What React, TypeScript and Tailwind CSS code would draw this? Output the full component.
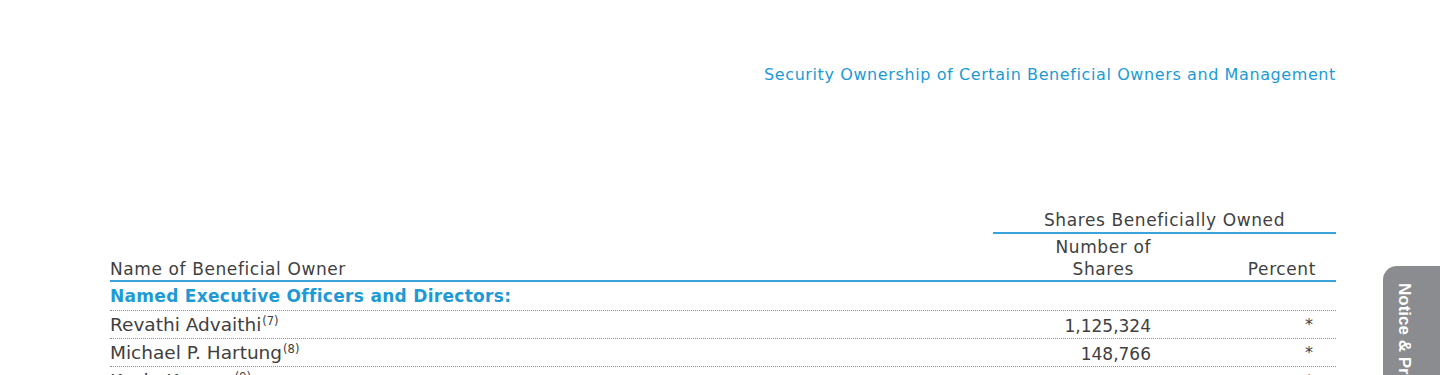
import React from "react";

// Beneficial ownership table (proxy statement page)

type Owner = {
  name: string;
  note: string;
  shares: string;
  percent: string;
};

const OWNERS: Owner[] = [
  { name: "Revathi Advaithi", note: "(7)", shares: "1,125,324", percent: "*" },
  { name: "Michael P. Hartung", note: "(8)", shares: "148,766", percent: "*" },
  { name: "Kevin Krumm", note: "(9)", shares: "92,418", percent: "*" },
  { name: "Scott Offer", note: "(10)", shares: "231,905", percent: "*" },
];

function OwnerRow({ owner }: { owner: Owner }) {
  return (
    <div className="grid h-7 grid-cols-[883px_158px_1fr] items-center border-b border-dotted border-[#8f8f8f] pr-5">
      <div className="text-[18.5px] leading-6">
        {owner.name}
        <sup className="ml-[1px] text-[11.5px] tracking-normal">{owner.note}</sup>
      </div>
      <div className="pt-[2px] text-right text-[17px] leading-6">{owner.shares}</div>
      <div className="pr-[3px] text-right text-[16px] leading-6">{owner.percent}</div>
    </div>
  );
}

export default function App() {
  return (
    <div className="relative min-h-screen overflow-hidden bg-white font-['DejaVu_Sans',sans-serif] text-[#404041]">
      <div className="ml-[110px] w-[1226px] pt-[63px]">
        {/* Running header */}
        <p className="text-right text-[16px] leading-6 tracking-[0.6px] text-[#1d9ad6]">
          Security Ownership of Certain Beneficial Owners and Management
        </p>

        {/* Table */}
        <div className="mt-[122px]">
          <div className="ml-[883px] border-b-2 border-[#3ba3da] pb-[1px] text-center text-[17px] leading-[22px] tracking-[0.6px]">
            Shares Beneficially Owned
          </div>

          <div className="grid grid-cols-[883px_158px_1fr] items-end border-b-2 border-[#3ba3da] pr-5 pt-[2px] text-[17px] leading-[22px] tracking-[0.6px]">
            <div>Name of Beneficial Owner</div>
            <div className="text-right">
              <span className="inline-block text-center">
                Number of
                <br />
                Shares
              </span>
            </div>
            <div className="text-right">Percent</div>
          </div>

          <div className="flex h-[29px] items-center border-b border-dotted border-[#8f8f8f]">
            <span className="text-[17px] font-bold leading-6 tracking-[0.3px] text-[#1d9ad6]">
              Named Executive Officers and Directors:
            </span>
          </div>

          {OWNERS.map((owner) => (
            <OwnerRow key={owner.name} owner={owner} />
          ))}
        </div>
      </div>

      {/* Section side tab */}
      <div className="absolute right-0 top-[266px] h-[320px] w-[57px] rounded-tl-[14px] bg-[#8b8c8f] pl-[13px] pt-[17px]">
        <span className="font-['Liberation_Sans',sans-serif] text-[17px] font-bold leading-[16px] text-white [writing-mode:vertical-rl]">
          Notice &amp; Proxy Statement
        </span>
      </div>
    </div>
  );
}
